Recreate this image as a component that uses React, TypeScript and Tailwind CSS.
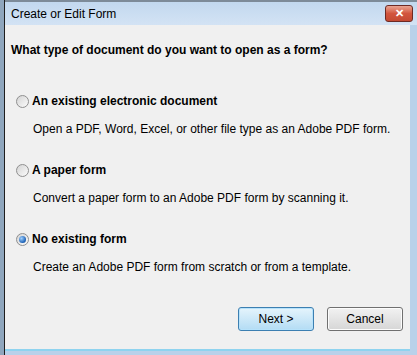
import { ReactNode } from 'react'

function Radio({ checked }: { checked?: boolean }) {
  return (
    <span className="flex h-[13px] w-[13px] items-center justify-center rounded-full border border-[#8f8f8f] bg-gradient-to-br from-[#d4d4d4] to-[#fbfbfb]">
      {checked && (
        <span className="h-[7px] w-[7px] rounded-full bg-[radial-gradient(circle_at_35%_35%,#9fd0ff,#1a5fb4_70%,#0b3d7a)]" />
      )}
    </span>
  )
}

function Option({
  label,
  children,
  checked,
}: {
  label: string
  children: ReactNode
  checked?: boolean
}) {
  return (
    <div className="flex flex-col">
      <div className="flex items-center gap-[3px] pl-[11px]">
        <Radio checked={checked} />
        <span className="text-[12px] font-bold text-black">{label}</span>
      </div>
      <p className="mt-[10px] pl-[28px] text-[12px] text-black">{children}</p>
    </div>
  )
}

function Button({ children, primary }: { children: ReactNode; primary?: boolean }) {
  return (
    <button
      className={
        primary
          ? 'h-[24px] w-[76px] rounded-[3px] border border-[#3c7fb1] bg-gradient-to-b from-[#e5f4fc] to-[#b3dcf4] text-[12px] text-black shadow-[inset_0_0_0_1px_#b6e2fb]'
          : 'h-[24px] w-[76px] rounded-[3px] border border-[#707070] bg-gradient-to-b from-[#f2f2f2] to-[#d6d6d6] text-[12px] text-black shadow-[inset_0_0_0_1px_#fcfcfc]'
      }
    >
      {children}
    </button>
  )
}

export default function App() {
  return (
    <div
      className="flex h-[355px] w-[417px] overflow-hidden bg-[#b9d1ea]"
      style={{ fontFamily: '"Liberation Sans", Arial, sans-serif' }}
    >
      <div className="w-[4px] bg-[#8fa6bd]" />
      <div className="flex flex-1 flex-col border-l border-[#1e1e1e]">
        <div className="flex h-[25px] items-center justify-between border-t-2 border-[#7d8b99] bg-gradient-to-b from-[#c2d8ef] to-[#d3e3f4] pl-[6px] pr-[4px]">
          <span className="text-[12px] text-black">Create or Edit Form</span>
          <span className="flex h-[17px] w-[28px] items-center justify-center rounded-[3px] border border-[#6d2a24] bg-gradient-to-b from-[#e8a493] via-[#d2553e] to-[#c44a33] text-[11px] font-bold text-white">
            ✕
          </span>
        </div>
        <div className="mr-[7px] mb-[4px] flex flex-1 flex-col border-b-2 border-[#8fd3ef] bg-[#f0f0f0]">
          <h1 className="mt-[16px] pl-[6px] text-[12px] font-bold text-black">
            What type of document do you want to open as a form?
          </h1>
          <div className="mt-[33px] flex flex-col gap-[23px]">
            <Option label="An existing electronic document">
              Open a PDF, Word, Excel, or other file type as an Adobe PDF form.
            </Option>
            <Option label="A paper form">
              Convert a paper form to an Adobe PDF form by scanning it.
            </Option>
            <Option label="No existing form" checked>
              Create an Adobe PDF form from scratch or from a template.
            </Option>
          </div>
          <div className="mt-auto mb-[18px] flex justify-end gap-[13px] pr-[7px]">
            <Button primary>Next &gt;</Button>
            <Button>Cancel</Button>
          </div>
        </div>
      </div>
    </div>
  )
}
